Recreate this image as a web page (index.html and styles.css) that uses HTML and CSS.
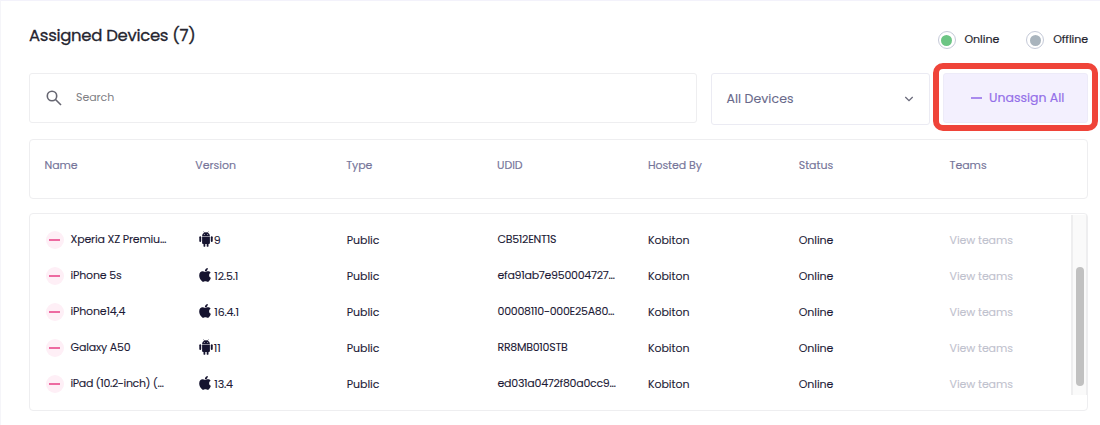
FILE: index.html
```html
<!DOCTYPE html>
<html lang="en">
<head>
<meta charset="utf-8">
<title>Assigned Devices</title>
<link rel="stylesheet" href="styles.css">
</head>
<body>
<svg class="defs" aria-hidden="true">
  <symbol id="android" viewBox="0 0 14 16">
    <path d="M3.1 4.9a3.9 3.6 0 0 1 2-3.1L4.3.5l.3-.2.9 1.3a4.3 4.3 0 0 1 3 0L9.4.3l.3.2-.8 1.3a3.9 3.6 0 0 1 2 3.1zM5.3 2.9a.45.45 0 1 0 .01 0zm3.4 0a.45.45 0 1 0 .01 0z" fill-rule="evenodd"/>
    <path d="M3.1 5.4h7.8v6.5a1 1 0 0 1-1 1H9.5v2a.9.9 0 0 1-1.8 0v-2H6.3v2a.9.9 0 0 1-1.8 0v-2h-.4a1 1 0 0 1-1-1z"/>
    <rect x=".3" y="5.3" width="1.9" height="5.6" rx=".95"/><rect x="11.8" y="5.3" width="1.9" height="5.6" rx=".95"/>
  </symbol>
  <symbol id="apple" viewBox="0 0 12 14">
    <path d="M8.8 0c.1 1-.3 1.8-.8 2.4-.5.6-1.3 1-2.1.9-.1-.9.3-1.7.8-2.3C7.200.4 8.100 0 8.8 0zM11.600 4.700C10.600 5.300 10.100 6.100 10.100 7.200c0 1.300.8 2.200 1.800 2.600-.3 1-.8 1.900-1.400 2.700-.5.7-1 1.300-1.900 1.300-.8 0-1.100-.5-2.200-.5s-1.500.5-2.200.5c-.9 0-1.500-.7-2.100-1.500C.9 10.900.2 9 .2 7.400c0-2.700 1.700-4.100 3.400-4.100.9 0 1.700.6 2.600.6.700 0 1.600-.6 2.800-.6 1 0 2 .5 2.600 1.400z"/>
  </symbol>
</svg>
<main class="page">
  <header class="top">
    <h1 class="title">Assigned Devices (7)</h1>
    <div class="legend">
      <span class="key"><i class="ring green"></i>Online</span>
      <span class="key"><i class="ring gray"></i>Offline</span>
    </div>
  </header>
  <section class="tools">
    <div class="search">
      <svg width="16" height="16" viewBox="0 0 16 16"><circle cx="6" cy="6" r="4.7"/><path d="M9.500 9.500L15 15"/></svg>
      <span>Search</span>
    </div>
    <div class="select"><span>All Devices</span><svg width="10" height="6" viewBox="0 0 10 6"><path d="M1.300 1L5 4.700L8.700 1"/></svg></div>
    <div class="unassign-wrap">
      <button class="unassign"><i></i><span>Unassign All</span></button>
      <div class="highlight"></div>
    </div>
  </section>
  <section class="head cols">
    <span>Name</span><span>Version</span><span>Type</span><span>UDID</span><span>Hosted By</span><span>Status</span><span>Teams</span>
  </section>
  <section class="list">
    <div class="rows">
      <div class="row cols"><div class="name"><i class="minus"></i><span>Xperia XZ Premiu…</span></div><div class="ver"><svg class="android"><use href="#android"/></svg><span>9</span></div><span>Public</span><span class="udid">CB512ENT1S</span><span class="host">Kobiton</span><span class="status">Online</span><span class="view">View teams</span></div>
      <div class="row cols"><div class="name"><i class="minus"></i><span>iPhone 5s</span></div><div class="ver"><svg class="apple"><use href="#apple"/></svg><span>12.5.1</span></div><span>Public</span><span class="udid">efa91ab7e950004727…</span><span class="host">Kobiton</span><span class="status">Online</span><span class="view">View teams</span></div>
      <div class="row cols"><div class="name"><i class="minus"></i><span>iPhone14,4</span></div><div class="ver"><svg class="apple"><use href="#apple"/></svg><span>16.4.1</span></div><span>Public</span><span class="udid">00008110-000E25A80…</span><span class="host">Kobiton</span><span class="status">Online</span><span class="view">View teams</span></div>
      <div class="row cols"><div class="name"><i class="minus"></i><span>Galaxy A50</span></div><div class="ver"><svg class="android"><use href="#android"/></svg><span>11</span></div><span>Public</span><span class="udid">RR8MB010STB</span><span class="host">Kobiton</span><span class="status">Online</span><span class="view">View teams</span></div>
      <div class="row cols"><div class="name"><i class="minus"></i><span class="tight">iPad (10.2-inch) (…</span></div><div class="ver"><svg class="apple"><use href="#apple"/></svg><span>13.4</span></div><span>Public</span><span class="udid">ed031a0472f80a0cc9…</span><span class="host">Kobiton</span><span class="status">Online</span><span class="view">View teams</span></div>
    </div>
    <div class="track"><div class="thumb"></div></div>
  </section>
</main>
</body>
</html>
```
FILE: styles.css
```css
* { box-sizing: border-box; }
body { margin: 0; background: #fff; font-family: Poppins, Inter, sans-serif; font-size: 11px; letter-spacing: -0.05px; color: #1c1a36; -webkit-text-stroke: 0.1px currentColor; }
.defs { position: absolute; width: 0; height: 0; }
.page { height: 425px; padding: 0 12px 0 28px; border-top: 1px solid #f3f2fb; border-left: 1px solid #f5f5f9; overflow: hidden; }
.top { height: 72px; display: flex; justify-content: space-between; }
.title { margin: 0; padding-top: 23px; font-size: 16.500px; line-height: 24px; font-weight: 400; letter-spacing: -0.300px; color: #25252f; -webkit-text-stroke-width: 0.300px; }
.legend { display: flex; gap: 27px; padding-top: 28px; height: 48px; }
.key { display: flex; align-items: center; gap: 9px; height: 20px; line-height: 18px; color: #25252f; -webkit-text-stroke-width: 0.200px; }
.ring { width: 18px; height: 18px; margin-top: 2px; border: 1px solid #c5cad8; border-radius: 50%; display: grid; place-items: center; }
.ring::before { content: ""; width: 11px; height: 11px; border-radius: 50%; }
.green::before { background: #6cc584; }
.gray::before { background: #a9b4bd; }
.tools { display: grid; grid-template-columns: 668px 219px 145px; column-gap: 13.500px; height: 66px; align-items: start; }
.search { height: 50px; border: 1px solid #eeeef0; border-radius: 3px; display: flex; align-items: center; gap: 14.500px; padding-left: 15.500px; color: #808084; -webkit-text-stroke-width: 0; }
.search svg { fill: none; stroke: #666671; stroke-width: 1.600; }
.search span { padding-bottom: 2px; }
.select { height: 52px; border: 1px solid #ebebf3; border-radius: 3px; display: flex; align-items: center; justify-content: space-between; padding: 0 15px; font-size: 12.500px; letter-spacing: 0.050px; color: #69698a; }
.select svg { fill: none; stroke: #69697a; stroke-width: 1.300; }
.unassign-wrap { position: relative; height: 50px; }
.unassign { width: 100%; height: 50px; border: 1px solid #edebf8; border-radius: 3px; background: #f3f0fe; display: flex; align-items: center; gap: 7px; padding: 0 0 0 27px; font: 400 12.500px/18px Poppins, Inter, sans-serif; color: #936fe9; white-space: nowrap; -webkit-text-stroke: 0.200px #936fe9; }
.unassign i { width: 11px; height: 2px; background: #a98bee; }
.highlight { position: absolute; left: -10px; top: -10px; width: 165px; height: 68px; border: 6px solid #ef4439; border-radius: 10px; }
.cols { display: grid; grid-template-columns: repeat(7, 150.850px); white-space: nowrap; }
.head { width: 1059px; height: 60px; border: 1px solid #eeeef0; border-radius: 4px; padding: 17px 0 0 14.500px; line-height: 16px; letter-spacing: -0.050px; color: #76759a; -webkit-text-stroke-width: 0.150px; }
.list { width: 1059px; height: 198px; margin-top: 14px; border: 1px solid #eeeef0; border-radius: 4px; display: flex; justify-content: space-between; }
.rows { width: 1041px; padding: 8px 0 0 14.500px; }
.row { width: 1026px; height: 36px; align-items: center; line-height: 18px; padding-bottom: 1px; }
.row > span { padding-left: 0.500px; }
.row .udid { padding: 0 0 1px 0.500px; letter-spacing: -0.270px; }
.row .host, .row .status { padding-left: 0; }
.row .view { padding-left: 0; color: #bfc2ce; letter-spacing: -0.100px; }
.name { display: flex; align-items: center; gap: 7px; padding-left: 1px; letter-spacing: -0.180px; }
.name span { padding-bottom: 1px; }
.name .tight { letter-spacing: -0.360px; }
.minus { width: 18px; height: 18px; border-radius: 50%; background: #feeff6; display: grid; place-items: center; }
.minus::before { content: ""; width: 11px; height: 2px; background: #ed6aa1; }
.ver { display: flex; align-items: center; padding-left: 3.500px; letter-spacing: -0.180px; }
.ver svg { fill: #15132f; margin-bottom: 2px; }
.android { width: 14px; height: 16px; margin-right: 1px; }
.apple { width: 12px; height: 14px; margin-right: 3.500px; }
.track { width: 16px; height: 180px; margin-top: 1px; background: #fafafa; border: solid #eeeeef; border-width: 0 1px 0 2px; display: flex; justify-content: center; padding-top: 52px; }
.thumb { width: 8px; height: 119px; border-radius: 4px; background: #c1c1c1; }
```
